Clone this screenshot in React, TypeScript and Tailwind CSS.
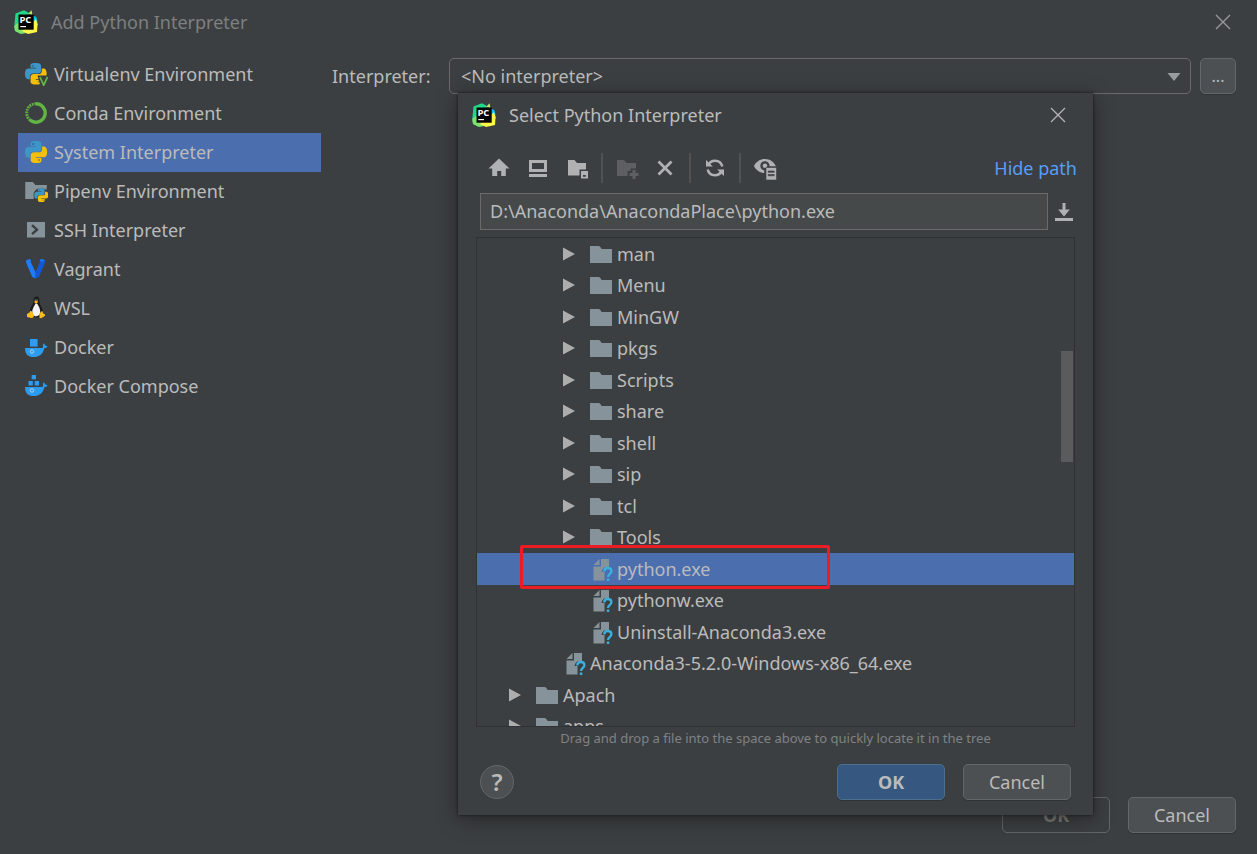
import type { ReactNode } from "react";

const PY_TOP =
  "M14.25.18l.9.2.73.26.59.3.45.32.34.34.25.34.16.33.1.3.04.26.02.2-.01.13V8.5l-.05.63-.13.55-.21.46-.26.38-.3.31-.33.25-.35.19-.35.14-.33.1-.3.07-.26.04-.21.02H8.77l-.69.05-.59.14-.5.22-.41.27-.33.32-.27.35-.2.36-.15.37-.1.35-.07.32-.04.27-.02.21v3.06H3.17l-.21-.03-.28-.07-.32-.12-.35-.18-.36-.26-.36-.36-.35-.46-.32-.59-.28-.73-.21-.88-.14-1.05-.05-1.23.06-1.22.16-1.04.24-.87.32-.71.36-.57.4-.44.42-.33.42-.24.4-.16.36-.1.32-.05.24-.01h.16l.06.01h8.16v-.83H6.18l-.01-2.75-.02-.37.05-.34.11-.31.17-.28.25-.26.31-.23.38-.2.44-.18.51-.15.58-.12.64-.1.71-.06.77-.04.84-.02 1.27.05z";
const PY_BOTTOM =
  "M21.04 6.11l.28.06.32.12.35.18.36.27.36.35.35.47.32.59.28.73.21.88.14 1.04.05 1.23-.06 1.23-.16 1.04-.24.86-.32.71-.36.57-.4.45-.42.33-.42.24-.4.16-.36.09-.32.05-.24.02-.16-.01h-8.22v.82h5.84l.01 2.76.02.36-.05.34-.11.31-.17.29-.25.25-.31.24-.38.2-.44.17-.51.15-.58.13-.64.09-.71.07-.77.04-.84.01-1.27-.04-1.07-.14-.9-.2-.73-.25-.59-.3-.45-.33-.34-.34-.25-.34-.16-.33-.1-.3-.04-.25-.02-.2.01-.13v-5.34l.05-.64.13-.54.21-.46.26-.38.3-.32.33-.24.35-.2.35-.14.33-.1.3-.06.26-.04.21-.02.13-.01h5.84l.69-.05.59-.14.5-.21.41-.28.33-.32.27-.35.2-.36.15-.36.1-.35.07-.32.04-.28.02-.21V6.07h2.09l.14.01z";

function Icon({ children }: { children: ReactNode }) {
  return (
    <svg viewBox="0 0 24 24" className="size-6 shrink-0" fill="currentColor" aria-hidden="true">
      {children}
    </svg>
  );
}

function PythonMark() {
  return (
    <>
      <path d={PY_TOP} fill="#3e96c8" />
      <path d={PY_BOTTOM} fill="#f2bf0b" />
      <circle cx="8.8" cy="3.3" r="1.2" fill="#2f6f9b" />
      <circle cx="15.2" cy="20.7" r="1.2" fill="#a88a1c" />
    </>
  );
}

function PythonIcon() {
  return (
    <Icon>
      <g transform="translate(1 1) scale(0.92)">
        <PythonMark />
      </g>
    </Icon>
  );
}

function VirtualenvIcon() {
  return (
    <Icon>
      <g transform="translate(1 1) scale(0.9)">
        <PythonMark />
      </g>
      <path d="M13.5 13.5h11V24h-8z" fill="#3c3f41" />
      <path d="M16 15l3.7 8.2L23.5 15" fill="none" stroke="#62b543" strokeWidth="1.8" />
    </Icon>
  );
}

function CondaIcon() {
  return (
    <Icon>
      <path d="M12 2.8a9.2 9.2 0 1 1-6 16.2" fill="none" stroke="#62b543" strokeWidth="3.4" />
      <path
        d="M6.3 19.2A9.2 9.2 0 0 1 12 2.8"
        fill="none"
        stroke="#62b543"
        strokeWidth="3"
        strokeDasharray="1.8 .8"
      />
      <path
        d="M6 18A8.6 8.6 0 0 1 11 3.6"
        fill="none"
        stroke="#3c3f41"
        strokeWidth=".8"
        strokeDasharray="1.2 1.6"
      />
    </Icon>
  );
}

function PipenvIcon() {
  return (
    <Icon>
      <path d="M1.5 3h6.2c1.2 0 2 .8 3.2 3H22.5v13.5H1.5z" fill="#87939a" />
      <circle cx="17" cy="16.5" r="7.8" fill="#3c3f41" />
      <path d="M1.5 3h6.2c1.2 0 2 .8 3.2 3H22.5v3.5H13L9.5 13v7h-8z" fill="#87939a" />
      <g transform="translate(10.3 9.2) scale(0.58)">
        <PythonMark />
      </g>
    </Icon>
  );
}

function SshIcon() {
  return (
    <Icon>
      <path d="M3 4h18v15.5H3z" fill="#87939a" />
      <path d="M8 7.2l5 4.5-5 4.5" fill="none" stroke="#3c3f41" strokeWidth="2.4" />
    </Icon>
  );
}

function VagrantIcon() {
  return (
    <Icon>
      <path d="M2 3.2L6 2l.8 1v2l4.9 10.5V21.5L8.3 20 2 5.5z" fill="#1d7bff" />
      <path d="M21 3.2L17.2 2l-1.5 1.2v2l-4.2 10.3v6l3.4-1.5L21 5.5z" fill="#1058d6" />
      <path d="M15.7 3.2L17.2 2 21 3.2l-3 1.5z" fill="#1d7bff" />
    </Icon>
  );
}

function WslIcon() {
  return (
    <Icon>
      <path
        d="M12.5.6c-2 0-3 1.5-3 3.4.1 2.4-.2 3.4-1.5 5.2C6.5 11.4 5.5 14 5.8 17.2L9 21.2h6.5l3.5-4c.1-3-.8-5.5-2.3-7.7-1.2-1.8-1.3-3-1.3-5.3 0-2.2-1-3.6-2.9-3.6z"
        fill="#1c1c1c"
      />
      <path
        d="M12 7.2c-1.2 1-1.6 2.5-2.7 4.5-1 2-1.5 4.2-.5 6.3.8 1.8 2 2.3 3.2 2.3 1.8 0 3.2-1 3.9-2.7.7-2 0-4.6-.8-6.5-.8-1.7-1.4-3.3-3.1-3.9z"
        fill="#f4f4f4"
      />
      <path d="M10.3 5.5l1.7-1 2 .9-.2 1.2-1.8 1-1.5-.9z" fill="#f9b916" />
      <circle cx="11.2" cy="4" r=".6" fill="#ddd" />
      <circle cx="13.2" cy="4" r=".6" fill="#ddd" />
      <path d="M3 18l2.5-1.5.8-1.7 1.8.8 2 4.2-.8 1.8-1.8.5L3 21z" fill="#fbbd19" />
      <path d="M21 18.5l-2-1.2-.4-2-1.6.3-1.7 3 .2 3.2 1.5.4 1.8-1 2.2-1.5z" fill="#fbbd19" />
    </Icon>
  );
}

function Whale() {
  return (
    <>
      <path
        d="M1 13h16.8c1.2-.1 1.5-.9 1.2-1.8-.2-1 0-2 .6-2.9.9.6 1.3 1.4 1.4 2.3.9-.1 1.7.1 2.5.6-.6 1.3-1.7 1.9-3.2 2C18.8 19.3 15.2 22 9.500 22 4 22 1.200 19.500 1 13z"
        fill="#2d9cee"
      />
      <circle cx="8" cy="16.500" r="1.700" fill="none" stroke="#a9d4f5" strokeWidth="1" />
    </>
  );
}

function DockerIcon() {
  return (
    <Icon>
      <path d="M6 4h7.600v7.600H6z" fill="#2d9cee" />
      <Whale />
    </Icon>
  );
}

function ComposeIcon() {
  return (
    <Icon>
      <path d="M7.700 1H12v4.300H7.700zM4.500 7h4.300v4.500H4.500zM10.700 7H15v4.500h-4.300z" fill="#2d9cee" />
      <Whale />
    </Icon>
  );
}

function PyCharmLogo() {
  return (
    <svg viewBox="0 0 24 24" className="size-6 shrink-0" aria-hidden="true">
      <path d="M17 4.500l5.500 2.800L24 15l-5 3z" fill="#07c3f2" />
      <path d="M1.500 3.500L10 .3l5 2.700L6 23.500l-5-2.800L.3 16z" fill="#21d789" />
      <path d="M14 4l3.500-3.700L18.500 5z" fill="#b8e85c" />
      <path d="M.3 16L4 13l16 4-5 5.500-8 1.500-6-3z" fill="#7fe36b" />
      <path d="M19 12l3-3 1.500 5.500-.5 7.500-9 2-6-3z" fill="#fcf84a" />
      <path d="M4.500 4.500h15.200v15.200H4.500z" fill="#000" />
      <text
        x="5.400"
        y="12.600"
        fontSize="9.500"
        fontWeight="700"
        fill="#fff"
        fontFamily="'Open Sans', sans-serif"
      >
        PC
      </text>
      <path d="M6.300 16H12v1.200H6.300z" fill="#fff" />
    </svg>
  );
}

function CloseIcon() {
  return (
    <svg viewBox="0 0 16 16" className="size-4" aria-hidden="true">
      <path d="M1 1l14 14M15 1L1 15" stroke="currentColor" strokeWidth="1.300" />
    </svg>
  );
}

function FolderIcon() {
  return (
    <Icon>
      <path d="M1 4h8.500c1.500 0 2.300 1.500 3.200 3H23v14H1z" fill="#87939a" />
    </Icon>
  );
}

function UnknownFileIcon() {
  return (
    <Icon>
      <path d="M10.500 2v6h-6z" fill="#87939a" />
      <path d="M12 2h8v8.500c-3.500-1.500-7 .5-7.500 4.500h3v8.500h-11v-14H12z" fill="#87939a" />
      <path
        d="M15.300 14.500c0-2.300 1.500-3.500 3.500-3.500s3.600 1.200 3.600 3.200c0 2.600-3.400 2.700-3.400 5.800"
        fill="none"
        stroke="#3bb1dd"
        strokeWidth="2.300"
      />
      <path d="M17.800 21.500h2.500V24h-2.500z" fill="#3bb1dd" />
    </Icon>
  );
}

const environments = [
  { label: "Virtualenv Environment", icon: <VirtualenvIcon /> },
  { label: "Conda Environment", icon: <CondaIcon /> },
  { label: "System Interpreter", icon: <PythonIcon />, selected: true },
  { label: "Pipenv Environment", icon: <PipenvIcon /> },
  { label: "SSH Interpreter", icon: <SshIcon /> },
  { label: "Vagrant", icon: <VagrantIcon /> },
  { label: "WSL", icon: <WslIcon /> },
  { label: "Docker", icon: <DockerIcon /> },
  { label: "Docker Compose", icon: <ComposeIcon /> },
];

type Node = { name: string; indent: string; file?: boolean; selected?: boolean };

// indent is where the expand arrow of the row starts
const nodes: Node[] = [
  { name: "man", indent: "pl-[86px]" },
  { name: "Menu", indent: "pl-[86px]" },
  { name: "MinGW", indent: "pl-[86px]" },
  { name: "pkgs", indent: "pl-[86px]" },
  { name: "Scripts", indent: "pl-[86px]" },
  { name: "share", indent: "pl-[86px]" },
  { name: "shell", indent: "pl-[86px]" },
  { name: "sip", indent: "pl-[86px]" },
  { name: "tcl", indent: "pl-[86px]" },
  { name: "Tools", indent: "pl-[86px]" },
  { name: "python.exe", indent: "pl-[86px]", file: true, selected: true },
  { name: "pythonw.exe", indent: "pl-[86px]", file: true },
  { name: "Uninstall-Anaconda3.exe", indent: "pl-[86px]", file: true },
  { name: "Anaconda3-5.2.0-Windows-x86_64.exe", indent: "pl-[59px]", file: true },
  { name: "Apach", indent: "pl-8" },
  { name: "apps", indent: "pl-8" },
];

const button =
  "h-9 w-[108px] rounded-[5px] border border-[#646767] bg-[#4c5052] shadow-[0_1px_1px_#00000030]";

function TreeRow({ name, indent, file, selected }: Node) {
  return (
    <li
      role="treeitem"
      aria-selected={!!selected}
      className={`relative flex min-h-0 items-center ${indent} ${selected ? "bg-[#4b6eaf]" : ""}`}
    >
      <span className="w-[26px] shrink-0">
        {!file && (
          <svg viewBox="0 0 13 14" className="h-[14px] w-[13px]" aria-hidden="true">
            <path d="M0 .5v13L12 7z" fill="#adadad" />
          </svg>
        )}
      </span>
      {file ? <UnknownFileIcon /> : <FolderIcon />}
      <span className="ml-1 whitespace-nowrap">{name}</span>
      {selected && (
        <span className="absolute -top-2 -bottom-1 left-[43px] z-10 w-[310px] rounded-xs border-3 border-[#ed1c24]" />
      )}
    </li>
  );
}

type ToolButtonProps = { label: string; disabled?: boolean; children: ReactNode };

function ToolButton({ label, disabled, children }: ToolButtonProps) {
  return (
    <button type="button" aria-label={label} disabled={disabled} className="disabled:text-[#5e5f60]">
      <Icon>{children}</Icon>
    </button>
  );
}

function Separator() {
  return <div className="h-[30px] w-[2px] bg-[#515151]" />;
}

function Toolbar() {
  return (
    <div className="flex items-center gap-3 text-[#afb1b3]">
      <div className="flex gap-[15px]">
        <ToolButton label="Home">
          <path d="M12 2.500L22.500 12.500h-3.700V20h-4.600v-5h-4v5H5.200v-7.500H1.500z" />
        </ToolButton>
        <ToolButton label="Desktop">
          <path d="M3 4h18v12H3zM6 7v6h12V7zM3 18h18v3H3z" fillRule="evenodd" />
        </ToolButton>
        <ToolButton label="Module">
          <path d="M3 4h6.500l2.500 3h9v6.500h-6.500v6H3z" />
          <path d="M16 15h7v7.500h-7zM18 19v1.700h2.800V19z" fillRule="evenodd" />
        </ToolButton>
      </div>
      <Separator />
      <div className="flex gap-[14px]">
        <ToolButton label="New Folder" disabled>
          <path d="M2 4h7l2.500 3H21v5.500h-5.500V15h-3v5H2z" />
          <path d="M17.500 14h3v3h3v3h-3v3h-3v-3h-3v-3h3z" />
        </ToolButton>
        <ToolButton label="Delete">
          <path d="M5.500 5.500l13 13M18.500 5.500l-13 13" stroke="currentColor" strokeWidth="2.800" />
        </ToolButton>
      </div>
      <Separator />
      <ToolButton label="Refresh">
        <path
          d="M5.500 8.500C7 6 9 4.800 12 4.800c3.700 0 6.500 2.200 7.300 5.700M18.500 15.500c-1.500 2.500-3.500 3.700-6.500 3.700-3.700 0-6.500-2.200-7.300-5.700"
          fill="none"
          stroke="currentColor"
          strokeWidth="2.500"
        />
        <path d="M3 4v6.600h6.800zM21 20v-6.600h-6.800z" />
      </ToolButton>
      <Separator />
      <ToolButton label="Show Hidden Files">
        <path
          d="M12 3C7 3 3 5.800 1 10c1.800 4 5.500 6.800 10.200 7v-2.700A4.600 4.600 0 1 1 16.500 10.300H23C20.800 5.800 17 3 12 3z"
        />
        <circle cx="12" cy="9.800" r="2.300" />
        <path
          d="M13 11.500h10.500V24H13zM15.200 15v1.300h6V15zM15.200 18.500v1.300h6v-1.300z"
          fillRule="evenodd"
          stroke="#3c3f41"
          strokeWidth=".6"
        />
      </ToolButton>
    </div>
  );
}

function SelectDialog() {
  return (
    <section
      role="dialog"
      aria-labelledby="dialog-title"
      className="absolute top-[93px] left-[458px] w-[635px] bg-[#3c3f41] shadow-[0_4px_20px_#00000066,0_0_3px_#00000099]"
    >
      <header className="flex h-11 items-center pr-[27px] pl-[14px]">
        <PyCharmLogo />
        <h2 id="dialog-title" className="ml-[13px] flex-1">
          Select Python Interpreter
        </h2>
        <button type="button" aria-label="Close dialog" className="text-[#b4b5b6]">
          <CloseIcon />
        </button>
      </header>

      <div className="flex items-center justify-between pt-4 pr-4 pl-[29px]">
        <Toolbar />
        <a href="#path" className="text-[#589df6]">
          Hide path
        </a>
      </div>

      <div className="mt-[10px] flex items-center gap-1 pr-[17px] pl-[22px]">
        <input
          type="text"
          aria-label="Path"
          defaultValue="D:\Anaconda\AnacondaPlace\python.exe"
          className="h-[37px] min-w-0 flex-1 border border-[#6b6b6b] bg-[#45494a] px-[9px] pb-0.5 outline-none"
        />
        <button type="button" aria-label="Path history" className="text-[#afb1b3]">
          <Icon>
            <path d="M10.500 3h3v6.500h4.300L12 16.500 6.200 9.500h4.300zM3 18h18v3H3z" />
          </Icon>
        </button>
      </div>

      <div className="relative mx-[18px] mt-[7px] h-[490px] overflow-hidden border border-[#2f3133]">
        <ul role="tree" aria-label="Files" className="grid h-[504px] auto-rows-fr">
          {nodes.map((node) => (
            <TreeRow key={node.name} {...node} />
          ))}
        </ul>
        <div className="absolute top-[113px] right-px h-[111px] w-3 bg-[#595b5d]" />
      </div>
      <p className="h-[22px] text-center text-[13px] leading-[22px] text-[#808284]">
        Drag and drop a file into the space above to quickly locate it in the tree
      </p>

      <footer className="flex items-center gap-[18px] pt-[15px] pr-[22px] pb-[15px] pl-[22px]">
        <button
          type="button"
          aria-label="Help"
          className="mr-auto size-[34px] rounded-full border border-[#646767] bg-[#4c5052] text-2xl leading-none font-semibold"
        >
          ?
        </button>
        <button
          type="button"
          className="h-9 w-[108px] rounded-[5px] border border-[#4c708c] bg-[#365880] font-bold shadow-[0_1px_1px_#00000030]"
        >
          OK
        </button>
        <button type="button" className={button}>
          Cancel
        </button>
      </footer>
    </section>
  );
}

export default function App() {
  return (
    <div className="relative flex min-h-screen flex-col overflow-hidden bg-[#3c3f41] font-['Noto_Sans',sans-serif] text-lg leading-6 text-[#bbbbbb]">
      <header className="flex h-[43px] items-center pr-[26px] pl-[14px]">
        <PyCharmLogo />
        <h1 className="ml-[13px] flex-1 text-[#7d7f80]">Add Python Interpreter</h1>
        <button type="button" aria-label="Close" className="text-[#9a9b9c]">
          <CloseIcon />
        </button>
      </header>

      <main className="flex flex-1 gap-[11px] pt-3 pr-[21px] pl-[18px]">
        <nav className="w-[303px] shrink-0">
          <ul>
            {environments.map(({ label, icon, selected }) => (
              <li key={label}>
                <button
                  type="button"
                  aria-pressed={!!selected}
                  className={`flex h-[39px] w-full items-center gap-[6px] pb-0.5 pl-[6px] ${selected ? "bg-[#4b6eaf]" : ""}`}
                >
                  {icon}
                  {label}
                </button>
              </li>
            ))}
          </ul>
        </nav>

        <div className="mt-[3px] flex h-9 flex-1 items-center">
          <label htmlFor="interpreter" className="w-[117px] shrink-0">
            Interpreter:
          </label>
          <div className="relative flex-1">
            <select
              id="interpreter"
              className="block h-9 w-full appearance-none rounded-[5px] border border-[#6b6b6b] px-[11px] outline-none"
            >
              <option>&lt;No interpreter&gt;</option>
            </select>
            <svg
              viewBox="0 0 14 8"
              className="pointer-events-none absolute top-[15px] right-[10px] h-2 w-[14px]"
              aria-hidden="true"
            >
              <path d="M.5 0h13L7 8z" fill="#9a9da0" />
            </svg>
          </div>
          <button
            type="button"
            aria-label="Browse"
            className="ml-[9px] size-9 rounded-[5px] border border-[#646767] bg-[#4c5052] text-base shadow-[0_1px_1px_#00000030]"
          >
            ...
          </button>
        </div>
      </main>

      <footer className="flex justify-end gap-[18px] pr-[21px] pb-[21px]">
        <button
          type="button"
          disabled
          className="h-9 w-[108px] rounded-[5px] border border-[#646767] font-bold text-[#777777]"
        >
          OK
        </button>
        <button type="button" className={button}>
          Cancel
        </button>
      </footer>

      <SelectDialog />
    </div>
  );
}
